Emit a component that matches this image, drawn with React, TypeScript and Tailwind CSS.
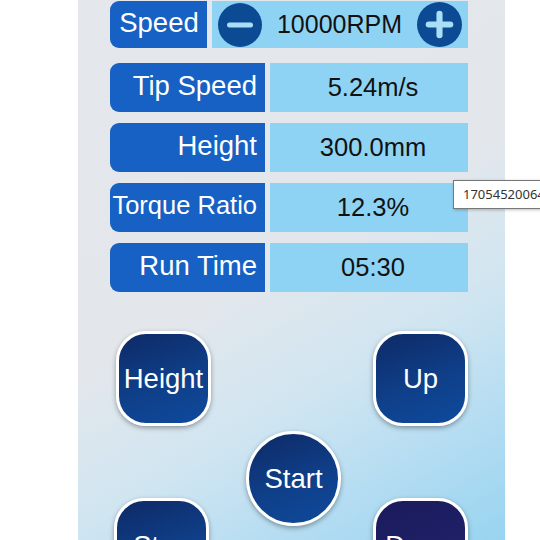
import React from "react";

const font = { fontFamily: '"Liberation Sans", Arial, sans-serif' };

function Label({ text, size }: { text: string; size: string }) {
  return (
    <div
      className={`w-[155px] h-full bg-[#1661c3] rounded-l-[9px] flex items-center justify-end pr-[8px] text-white ${size} leading-none pb-[3px] whitespace-nowrap`}
    >
      {text}
    </div>
  );
}

function Value({ text }: { text: string }) {
  return (
    <div className="w-[198px] h-full bg-[#8fd3f4] flex items-center justify-center pl-[8px] text-[#111] text-[25.5px] leading-none">
      {text}
    </div>
  );
}

function SquareBtn({ text, dark }: { text: string; dark?: boolean }) {
  return (
    <div
      className={`w-[95px] h-[95px] rounded-[30px] border-[3px] border-white shadow-[0_2px_5px_rgba(0,0,0,0.35)] flex items-center justify-center text-white text-[27.5px] ${
        dark
          ? "bg-[linear-gradient(160deg,#1b1a5c_0%,#22246f_100%)]"
          : "bg-[linear-gradient(160deg,#0e2a66_0%,#0f3f89_55%,#0e4a9c_100%)]"
      }`}
    >
      {text}
    </div>
  );
}

export default function App() {
  const rows: [string, string, string][] = [
    ["Tip Speed", "5.24m/s", "text-[27.5px]"],
    ["Height", "300.0mm", "text-[27.5px]"],
    ["Torque Ratio", "12.3%", "text-[25.5px]"],
    ["Run Time", "05:30", "text-[27.5px]"],
  ];
  return (
    <div className="relative w-[540px] h-[540px] bg-white overflow-hidden" style={font}>
      <div className="ml-[78px] w-[427px] h-[540px] overflow-hidden bg-[linear-gradient(150deg,#e4e7ec_0%,#e3e7ec_48%,#cfe5f1_68%,#b3dcf2_84%,#98d4f0_100%)]">
        <div className="pl-[32px] pt-[1px] flex flex-col">
          {/* Speed row */}
          <div className="flex h-[47px] gap-[5px]">
            <div className="w-[97px] h-full bg-[#1661c3] rounded-l-[9px] flex items-center justify-center text-white text-[27.5px] leading-none pb-[3px] pl-[1px]">
              Speed
            </div>
            <div className="w-[256px] h-full bg-[#8fd3f4] flex items-center justify-between px-[6px]">
              <svg width="44" height="44" viewBox="0 0 44 44">
                <circle cx="22" cy="22" r="22" fill="#0c4a94" />
                <rect x="9" y="19.5" width="26" height="5" rx="2.5" fill="#a9def7" />
              </svg>
              <span className="text-[#111] text-[25px] leading-none">10000RPM</span>
              <svg width="45" height="45" viewBox="0 0 44 44">
                <circle cx="22" cy="22" r="22" fill="#0c4a94" />
                <rect x="8.5" y="19" width="27" height="6" rx="3" fill="#a9def7" />
                <rect x="19" y="8.5" width="6" height="27" rx="3" fill="#a9def7" />
              </svg>
            </div>
          </div>
          <div className="flex flex-col gap-[11px] mt-[15px]">
            {rows.map(([l, v, s]) => (
              <div key={l} className="flex h-[49px] gap-[5px]">
                <Label text={l} size={s} />
                <Value text={v} />
              </div>
            ))}
          </div>
        </div>

        {/* Buttons */}
        <div className="mt-[39px] flex flex-col">
          <div className="flex justify-between pl-[38px] pr-[37px]">
            <SquareBtn text="Height" />
            <SquareBtn text="Up" />
          </div>
          <div className="flex justify-center pl-[4px] mt-[5px]">
            <div className="w-[95px] h-[95px] rounded-full border-[3px] border-white shadow-[0_2px_5px_rgba(0,0,0,0.35)] bg-[linear-gradient(160deg,#0e2a66_0%,#0f3f89_55%,#0e4a9c_100%)] flex items-center justify-center text-white text-[27.5px]">
              Start
            </div>
          </div>
          <div className="flex justify-between pl-[36px] pr-[37px] mt-[-28px]">
            <SquareBtn text="Stop" />
            <SquareBtn text="Down" dark />
          </div>
        </div>
      </div>

      {/* Tooltip */}
      <div
        className="absolute left-[453px] top-[180px] h-[29px] w-[120px] bg-white border border-[#777] shadow-[1px_1px_3px_rgba(0,0,0,0.25)] flex items-center pl-[9px] text-[13px] text-[#333]"
        style={{ fontFamily: '"Noto Sans", "Open Sans", sans-serif' }}
      >
        17054520064
      </div>
    </div>
  );
}
